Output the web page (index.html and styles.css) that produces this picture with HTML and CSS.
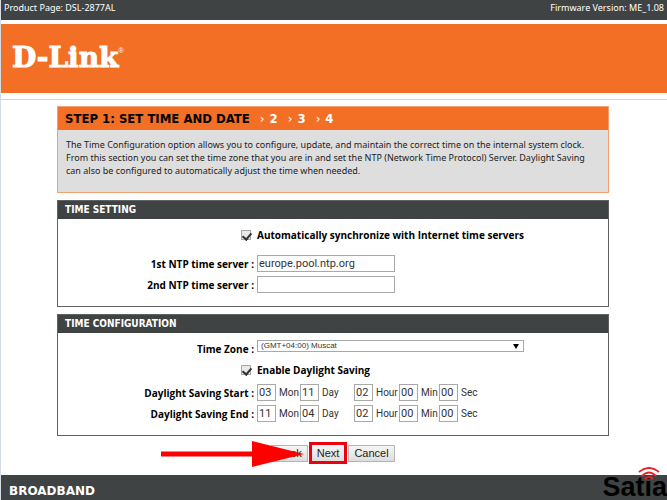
FILE: index.html
```html
<!DOCTYPE html>
<html lang="en">

<head>
    <meta charset="utf-8">
    <title>D-Link DSL-2877AL - Setup Wizard</title>
    <link rel="stylesheet" href="styles.css">
</head>

<body>
    <div class="topbar">
        <span>Product Page: DSL-2877AL</span>
        <span>Firmware Version: ME_1.08</span>
    </div>

    <div class="banner">
        <span class="logo">D-Link<sup>®</sup></span>
    </div>

    <form class="content">
        <div class="intro">
            <h1>STEP 1: SET TIME AND DATE
                <span class="step"><i>›</i>2</span>
                <span class="step"><i>›</i>3</span>
                <span class="step"><i>›</i>4</span>
            </h1>
            <p>The Time Configuration option allows you to configure, update, and maintain the correct time on the internal system clock. From this section you can set the time zone that you are in and set the NTP (Network Time Protocol) Server. Daylight Saving can also be configured to automatically adjust the time when needed.</p>
        </div>

        <div class="box">
            <h2>TIME SETTING</h2>
            <div class="rows">
                <div class="row row-check">
                    <input type="checkbox" id="auto" checked>
                    <label for="auto">Automatically synchronize with Internet time servers</label>
                </div>
                <div class="row">
                    <label for="ntp1">1st NTP time server :</label>
                    <input type="text" class="server" id="ntp1" value="europe.pool.ntp.org">
                </div>
                <div class="row">
                    <label for="ntp2">2nd NTP time server :</label>
                    <input type="text" class="server" id="ntp2">
                </div>
            </div>
        </div>

        <div class="box">
            <h2>TIME CONFIGURATION</h2>
            <div class="rows">
                <div class="row">
                    <label for="zone">Time Zone :</label>
                    <div class="zone">
                        <select id="zone">
                            <option>(GMT+04:00) Muscat</option>
                        </select>
                    </div>
                </div>
                <div class="row row-check">
                    <input type="checkbox" id="dst" checked>
                    <label for="dst">Enable Daylight Saving</label>
                </div>
                <div class="row">
                    <span class="name">Daylight Saving Start :</span>
                    <div class="date">
                        <label><input type="text" value="03">Mon</label>
                        <label><input type="text" value="11">Day</label>
                        <label><input type="text" value="02">Hour</label>
                        <label><input type="text" value="00">Min</label>
                        <label><input type="text" value="00">Sec</label>
                    </div>
                </div>
                <div class="row">
                    <span class="name">Daylight Saving End :</span>
                    <div class="date">
                        <label><input type="text" value="11">Mon</label>
                        <label><input type="text" value="04">Day</label>
                        <label><input type="text" value="02">Hour</label>
                        <label><input type="text" value="00">Min</label>
                        <label><input type="text" value="00">Sec</label>
                    </div>
                </div>
            </div>
        </div>

        <div class="buttons">
            <div class="back">
                <button type="button">Back</button>
                <svg class="arrow" width="143" height="26" viewBox="0 0 143 26">
                    <path d="M0 10.500H91V0L143 13L91 26V15.500H0Z" fill="#fe0000"/>
                </svg>
            </div>
            <button type="button" class="next">Next</button>
            <button type="button">Cancel</button>
        </div>
    </form>

    <div class="footer">
        <span class="broadband">BROADBAND</span>
        <span class="satia">Satia</span>
        <svg class="waves" width="22" height="14" viewBox="0 0 22 14">
            <g fill="none" stroke="#e3242b" stroke-width="2">
                <path d="M1 5Q11 -3 21 5"/>
                <path d="M4 9Q11 2 18 9"/>
                <path d="M7 12Q11 8 15 12"/>
            </g>
        </svg>
    </div>
</body>

</html>
```
FILE: styles.css
```css
*{
    box-sizing: border-box;
    padding: 0;
    margin: 0;
}

body{
    display: flex;
    flex-direction: column;
    min-height: 100vh;
    border-left: 1px solid #d5dde2;
    background-color: #ffffff;
    color: #222;
    font-family: "Noto Sans", Tahoma, sans-serif;
    font-size: 9px;
}

.topbar{
    display: flex;
    justify-content: space-between;
    height: 20px;
    padding: 0 3px;
    line-height: 16px;
    background-color: #404343;
    color: #ffffff;
}

.banner{
    height: 76px;
    margin-top: 4px;
    padding: 17px 11px;
    background: linear-gradient(#f36f25, #f36f25) no-repeat 0 0 / 100% 69px;
    border-bottom: 1px solid #bfdde5;
}

.logo{
    display: block;
    color: #ffffff;
    font: bold 28px/34px "DejaVu Serif", serif;
    -webkit-text-stroke: 1px #ffffff;
}

.logo sup{
    font: 7px/7px "Liberation Sans", sans-serif;
    vertical-align: 14px;
    -webkit-text-stroke: 0;
}

.content{
    width: 84%;
    max-width: 554px;
    margin: 6px auto 0;
    padding-right: 2px;
}

.intro{
    border: 1px solid #f5a070;
    background-color: #dedede;
}

.intro h1{
    height: 23px;
    padding-left: 7px;
    background-color: #f36f25;
    color: #000;
    font: bold 13px/23px "DejaVu Sans Condensed", Tahoma, sans-serif;
}

.step{
    margin-left: 6px;
    color: #ffffff;
}

.step i{
    margin-right: 5px;
    font-style: normal;
    font-weight: normal;
}

.intro p{
    min-height: 62px;
    padding: 8px 8px;
    line-height: 13px;
}

.box{
    margin-top: 7px;
    border: 1px solid #606262;
}

.box h2{
    height: 18px;
    padding-left: 7px;
    background-color: #404343;
    color: #ffffff;
    font: bold 10px/18px "DejaVu Sans Condensed", Tahoma, sans-serif;
}

.rows{
    display: grid;
    gap: 4px;
    padding: 7px 0 13px;
}

.row{
    display: grid;
    grid-template-columns: 196px 1fr;
    column-gap: 3px;
    align-items: center;
    min-height: 17px;
}

.row-check{
    margin-bottom: 2px;
}

.row-check:first-child{
    margin-bottom: 8px;
}

.row label,
.name{
    color: #000;
    font-family: "Open Sans", Tahoma, sans-serif;
    font-size: 10px;
    font-weight: bold;
}

.row > label:first-child,
.name{
    text-align: right;
}

.row-check input{
    appearance: none;
    justify-self: end;
    width: 10px;
    height: 10px;
    margin-right: 3px;
    border: 1px solid #a8a8a8;
    background-color: #e8e8e8;
}

.row-check input:checked::after{
    content: "";
    display: block;
    width: 4px;
    height: 7px;
    margin-left: 2px;
    border: solid #333;
    border-width: 0 2px 2px 0;
    transform: rotate(40deg);
}

input[type="text"]{
    height: 17px;
    padding: 0 1px;
    border: 1px solid #a9a9a9;
    background-color: #ffffff;
    color: #333;
    font: 11px Roboto, sans-serif;
}

input.server{
    width: 138px;
}

.zone{
    position: relative;
    width: 267px;
    height: 17px;
}

.zone::after{
    content: "";
    position: absolute;
    top: 4px;
    right: 5px;
    border: 3px solid transparent;
    border-top: 5px solid #000;
    border-bottom: 0;
}

select{
    appearance: none;
    display: block;
    width: 100%;
    height: 12px;
    padding: 0 3px;
    border: 1px solid #a9a9a9;
    background-color: #ffffff;
    color: #333;
    font: 8px/10px "Liberation Sans", sans-serif;
}

.date{
    display: grid;
    grid-template-columns: 43px 54px 45px 40px auto;
}

.row .date label{
    display: flex;
    align-items: center;
    gap: 3px;
    color: #333;
    font-family: Roboto, Tahoma, sans-serif;
    font-weight: normal;
}

.date input{
    width: 19px;
}

.buttons{
    display: flex;
    justify-content: center;
    align-items: center;
    gap: 1px;
    margin: 6px 0 11px;
}

button{
    height: 17px;
    padding: 0 5px;
    border: 1px solid #b4b4b4;
    background: linear-gradient(#f6f6f6, #dddddd);
    color: #222;
    font: 11px "Liberation Sans", sans-serif;
}

.back{
    position: relative;
}

.arrow{
    position: absolute;
    top: -4px;
    right: 4px;
}

.next{
    height: 22px;
    border: 3px solid #ec0010;
}

.footer{
    position: relative;
    display: flex;
    justify-content: space-between;
    flex: 1;
    padding-left: 8px;
    background-color: #404343;
}

.broadband{
    padding-top: 4px;
    color: #ffffff;
    font: bold 12px/25px "DejaVu Sans", sans-serif;
    height: 25px;
}

.satia{
    height: 25px;
    color: #000;
    font: bold 27px/25px "Liberation Sans", sans-serif;
}

.waves{
    position: absolute;
    top: -8px;
    right: 7px;
}
```
